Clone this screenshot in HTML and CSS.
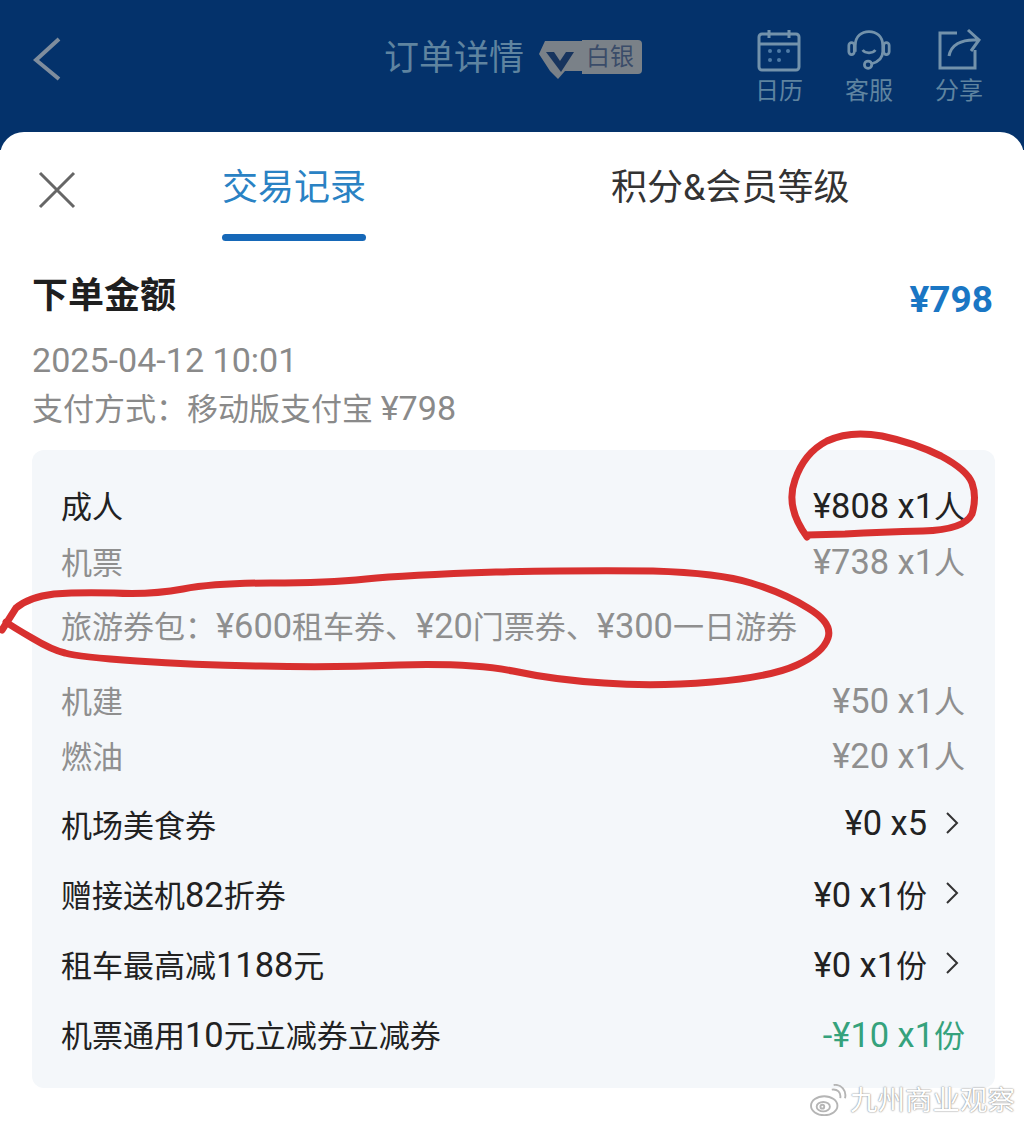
FILE: index.html
```html
<!DOCTYPE html>
<html lang="zh-CN">
<head>
    <meta charset="UTF-8">
    <meta name="viewport" content="width=device-width, initial-scale=1.0">
    <title>订单详情</title>
    <link rel="stylesheet" href="styles.css">
</head>
<body>
    <!-- Top bar -->
    <header class="topbar">
        <svg class="back-icon" viewBox="0 0 28 44"><path d="M26 2 L3 23 L26 42"/></svg>
        <div class="title-wrap">
            <span class="title">订单详情</span>
            <span class="badge">
                <svg class="badge-icon" viewBox="0 0 46 38"><path class="badge-shape" d="M6 0 H46 V30 H26 L19 38 L11 30 L0 13 Z"/><path class="badge-v" d="M7 11 H15 L21 20 L27 11 H35 L22 31 Z"/></svg>
                <span class="badge-text">白银</span>
            </span>
        </div>
        <div class="actions">
            <div class="action">
                <svg viewBox="0 0 44 44"><rect x="2" y="6" width="40" height="36" rx="3"/><path d="M2 16 H42 M12 2 V10 M32 2 V10"/><g class="dots"><circle cx="13" cy="23" r="2"/><circle cx="22" cy="23" r="2"/><circle cx="31" cy="23" r="2"/><circle cx="13" cy="32" r="2"/><circle cx="22" cy="32" r="2"/></g></svg>
                <span>日历</span>
            </div>
            <div class="action">
                <svg viewBox="0 0 48 44"><path d="M9 24 V17 C9 7 16 2 24 2 C32 2 39 7 39 17 V24 C39 31 34 35 27 37"/><rect x="2" y="14" width="6" height="13" rx="3"/><rect x="40" y="14" width="6" height="13" rx="3"/><path d="M17 22 C20 26 28 26 31 22"/><circle cx="23" cy="38" r="4"/></svg>
                <span>客服</span>
            </div>
            <div class="action">
                <svg viewBox="0 0 44 44"><path d="M20 5 H3 V40 H38 V22"/><path d="M12 28 C14 17 24 11 40 12 M31 2 L42 12 L34 23"/></svg>
                <span>分享</span>
            </div>
        </div>
    </header>

    <!-- Bottom sheet -->
    <main class="sheet">
        <nav class="tabs">
            <svg class="close-icon" viewBox="0 0 38 38"><path d="M2 2 L36 36 M36 2 L2 36"/></svg>
            <div class="tab tab-active">交易记录</div>
            <div class="tab tab-other">积分&amp;会员等级</div>
        </nav>

        <section class="summary">
            <div class="summary-head">
                <h1>下单金额</h1>
                <div class="total">¥798</div>
            </div>
            <p class="meta"><span class="num">2025-04-12 10:01</span></p>
            <p class="meta">支付方式：移动版支付宝 <span class="num">¥798</span></p>
        </section>

        <section class="panel">
            <div class="row row-adult"><span>成人</span><span><span class="num">¥808 x1</span>人</span></div>
            <div class="row row-sub row-ticket"><span>机票</span><span><span class="num">¥738 x1</span>人</span></div>
            <div class="row row-sub row-package"><span>旅游券包：<span class="num">¥600</span>租车券、<span class="num">¥20</span>门票券、<span class="num">¥300</span>一日游券</span></div>
            <div class="row row-sub row-tax"><span>机建</span><span><span class="num">¥50 x1</span>人</span></div>
            <div class="row row-sub row-fuel"><span>燃油</span><span><span class="num">¥20 x1</span>人</span></div>
            <div class="row row-link">
                <span>机场美食券</span>
                <span class="with-arrow"><span class="num">¥0 x5</span><svg class="arrow" viewBox="0 0 14 24"><path d="M2 2 L12 12 L2 22"/></svg></span>
            </div>
            <div class="row row-link">
                <span>赠接送机<span class="num">82</span>折券</span>
                <span class="with-arrow"><span><span class="num">¥0 x1</span>份</span><svg class="arrow" viewBox="0 0 14 24"><path d="M2 2 L12 12 L2 22"/></svg></span>
            </div>
            <div class="row row-link">
                <span>租车最高减<span class="num">1188</span>元</span>
                <span class="with-arrow"><span><span class="num">¥0 x1</span>份</span><svg class="arrow" viewBox="0 0 14 24"><path d="M2 2 L12 12 L2 22"/></svg></span>
            </div>
            <div class="row row-link">
                <span>机票通用<span class="num">10</span>元立减券立减券</span>
                <span class="discount"><span class="num">-¥10 x1</span>份</span>
            </div>
        </section>
    </main>

    <!-- Hand drawn red marks on top of the screenshot -->
    <svg class="marks" viewBox="0 0 1024 1125">
        <path d="M807 537 Q785 507 795 480 Q804 453 827 441 Q850 430 882 436 Q915 443 941 456 Q967 470 972 483 Q977 497 972 514 Q964 530 923 531 Q882 532 845 534 L807 535"/>
        <path d="M2 630 L16 608 Q29 597 54 594 Q78 592 114 593 Q150 595 183 589 Q216 583 271 583 Q327 583 366 579 Q405 575 496 572 Q588 570 653 571 Q719 573 751 583 Q784 593 808 608 Q833 623 828 638 Q823 653 797 665 Q771 677 712 682 Q654 687 604 683 Q555 680 513 671 Q471 663 399 665 Q327 668 261 666 Q196 665 137 661 Q78 657 65 653 Q52 650 32 638 Q13 627 6 622"/>
    </svg>

    <!-- Watermark -->
    <div class="watermark">
        <svg class="weibo-icon" viewBox="0 0 40 36"><ellipse cx="16" cy="23" rx="14" ry="10"/><ellipse cx="15" cy="24" rx="7" ry="5"/><circle cx="14" cy="24" r="2"/><path d="M24 6 C30 5 34 9 33 15 M26 1 C34 0 40 7 38 15"/></svg>
        <span>九州商业观察</span>
    </div>
</body>
</html>
```

FILE: styles.css
```css
* {
    box-sizing: border-box;
}
body {
    margin: 0;
    height: 1125px;
    overflow: hidden;
    position: relative;
    background-color: #fff;
    font-family: Roboto, "Noto Sans CJK SC", sans-serif;
}
svg {
    fill: none;
    display: block;
}

/* top bar */
.topbar {
    height: 150px;
    background-color: #04326b;
    display: flex;
    align-items: flex-start;
    position: relative;
}
.back-icon {
    width: 28px;
    height: 44px;
    margin: 37px 0 0 33px;
    stroke: #7f8d9d;
    stroke-width: 4;
}
.title-wrap {
    display: flex;
    align-items: center;
    margin: 35px 0 0 323px;
}
.title {
    font-size: 35px;
    line-height: 48px;
    color: #5f84a0;
}
.badge {
    display: flex;
    align-items: center;
    margin: 0 0 0 15px;
    position: relative;
}
.badge-icon {
    width: 46px;
    height: 38px;
    margin-top: 2px;
}
.badge-shape {
    fill: #7a8188;
}
.badge-v {
    fill: #17345e;
}
.badge-text {
    width: 60px;
    height: 34px;
    margin-left: -3px;
    margin-top: -5px;
    padding-left: 4px;
    border-radius: 0 4px 4px 0;
    background-color: #7a8188;
    color: #3a4c69;
    font-size: 24px;
    line-height: 34px;
}
.actions {
    display: flex;
    gap: 42px;
    margin: 28px 0 0 auto;
    padding-right: 41px;
}
.action {
    width: 48px;
    display: flex;
    flex-direction: column;
    align-items: center;
    color: #5f84a0;
    font-size: 24px;
    line-height: 32px;
}
.action svg {
    width: 44px;
    height: 44px;
    margin-bottom: 3px;
    stroke: #7392ab;
    stroke-width: 3;
}
.action .dots {
    fill: #4f7ba6;
    stroke: none;
}

/* sheet */
.sheet {
    position: absolute;
    top: 132px;
    left: 0;
    right: 0;
    bottom: 0;
    background-color: #fff;
    border-radius: 24px 24px 0 0;
    padding: 0 31px 0 32px;
}
.tabs {
    height: 110px;
    position: relative;
    display: flex;
    align-items: flex-start;
}
.close-icon {
    width: 38px;
    height: 38px;
    margin: 39px 0 0 6px;
    stroke: #666;
    stroke-width: 3;
}
.tab {
    font-size: 36px;
    line-height: 50px;
    margin-top: 31px;
    white-space: nowrap;
}
.tab-active {
    color: #2a82c4;
    margin-left: 146px;
}
.tab-active::after {
    content: "";
    display: block;
    height: 7px;
    margin-top: 21px;
    border-radius: 4px;
    background-color: #1668b8;
}
.tab-other {
    color: #333;
    margin-left: 245px;
}

/* summary */
.summary-head {
    display: flex;
    justify-content: space-between;
    align-items: flex-start;
    padding-top: 30px;
}
.summary-head h1 {
    margin: 0;
    font-size: 36px;
    line-height: 48px;
    font-weight: 700;
    color: #1f1f1f;
}
.total {
    font-size: 37px;
    line-height: 48px;
    font-weight: 700;
    color: #1a76c4;
    margin-top: 4px;
}
.meta {
    margin: 0;
    font-size: 31px;
    line-height: 48px;
    height: 48px;
    color: #8a8a8a;
}
.meta:first-of-type {
    margin-top: 12px;
}
.meta .num {
    font-size: 1.1em;
}

/* price panel */
.panel {
    margin-top: 18px;
    height: 638px;
    width: 963px;
    background-color: #f4f7fa;
    border-radius: 12px;
    padding: 32px 30px 0 29px;
}
.row {
    display: flex;
    justify-content: space-between;
    align-items: center;
    height: 44px;
    font-size: 31px;
    color: #222;
    white-space: nowrap;
}
.num {
    font-size: 1.11em;
}
.row-sub {
    color: #8f8f8f;
}
.row-ticket {
    margin-top: 12px;
}
.row-package {
    margin-top: 20px;
}
.row-tax {
    margin-top: 31px;
}
.row-fuel {
    margin-top: 11px;
}
.row-link {
    margin-top: 26px;
}
.row-fuel + .row-link {
    margin-top: 25px;
}
.with-arrow {
    display: flex;
    align-items: center;
    gap: 18px;
    padding-right: 6px;
}
.arrow {
    width: 14px;
    height: 24px;
    stroke: #333;
    stroke-width: 2;
}
.discount {
    color: #35a27c;
}

/* red pen marks */
.marks {
    position: absolute;
    inset: 0;
    width: 1024px;
    height: 1125px;
    stroke: #d8302f;
    stroke-width: 7;
    stroke-linecap: round;
    stroke-linejoin: round;
}

/* watermark */
.watermark {
    position: absolute;
    left: 809px;
    top: 1083px;
    display: flex;
    align-items: center;
    gap: 3px;
    color: #fff;
    font-size: 27.5px;
    line-height: 36px;
    white-space: nowrap;
    text-shadow: 0 0 2px #8f8f8f, 0 0 1px #8f8f8f;
}
.weibo-icon {
    width: 38px;
    height: 34px;
    stroke: #b5b5b5;
    stroke-width: 2;
}
```
